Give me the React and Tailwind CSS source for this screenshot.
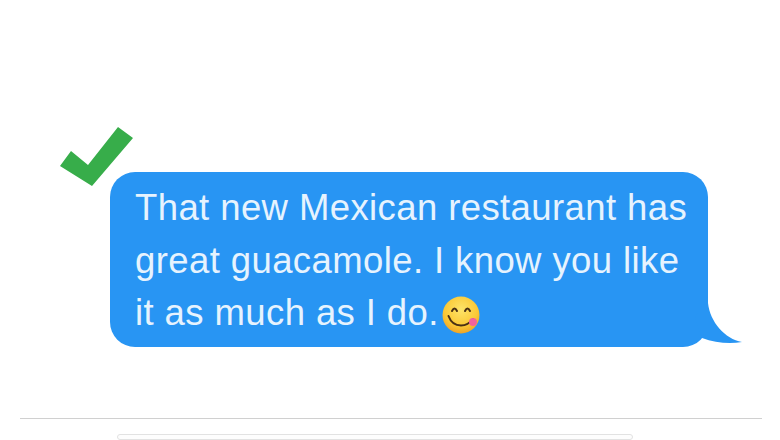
export default function App() {
  return (
    <div className="w-[780px] h-[440px] overflow-hidden bg-white flex flex-col font-['Liberation_Sans',Arial,sans-serif]">
      <div className="pt-[172px] pl-[110px]">
        <div className="relative w-[598px] h-[175px] rounded-[25px] bg-[#2895f3] pl-[25px] pt-[10px] text-[#e6f3fe] text-[36.5px] tracking-[0.4px] leading-[52.5px] whitespace-nowrap">
          <svg className="absolute left-[-50px] top-[-45px]" width="76" height="62" viewBox="0 0 76 62">
            <polygon points="58,0 73,11 32,59 0,39 11,24 28,38" fill="#37ad4a" />
          </svg>
          <svg className="absolute left-[585px] top-[125px]" width="50" height="50" viewBox="0 0 50 50">
            <path d="M13 0 V6 C15 25 30 42 47 45 C35 47 20 46 7 41 L0 20 Z" fill="#2895f3" />
          </svg>
          <div>That new Mexican restaurant has</div>
          <div>great guacamole. I know you like</div>
          <div className="flex items-center">
            <span>it as much as I do.</span>
            <svg className="mt-[3px] ml-[3px]" width="38" height="38" viewBox="0 0 38 38">
              <defs>
                <radialGradient id="face" cx="50%" cy="35%" r="70%">
                  <stop offset="0%" stopColor="#fde46a" />
                  <stop offset="65%" stopColor="#fbc834" />
                  <stop offset="100%" stopColor="#ec9a24" />
                </radialGradient>
              </defs>
              <circle cx="19" cy="19" r="18.5" fill="url(#face)" />
              <path d="M10 15 Q12.5 10 15 15 M23 15 Q25.5 10 28 15" fill="none" stroke="#4a3015" strokeWidth="2" strokeLinecap="round" />
              <path d="M6.5 20 Q10 29.5 19 29.5 Q26 29.5 31 23" fill="none" stroke="#4a3015" strokeWidth="2" strokeLinecap="round" />
              <circle cx="31" cy="26" r="4" fill="#f2629c" />
            </svg>
          </div>
        </div>
      </div>
      <div className="mt-[71px] ml-[20px] w-[742px] h-[2px] bg-[#d0d0d0]" />
      <div className="mt-[16px] ml-[117px] w-[516px] h-[40px] rounded-[8px] border border-[#e2e2e2] bg-[#fdfdfd]" />
    </div>
  );
}
